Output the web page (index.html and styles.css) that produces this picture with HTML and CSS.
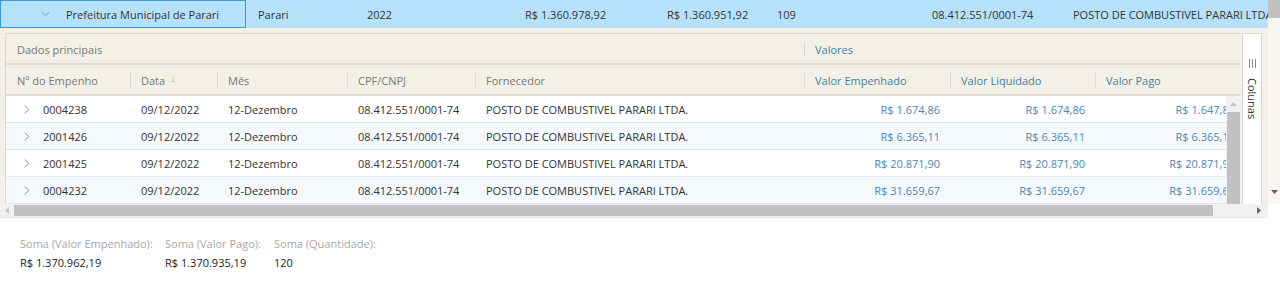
FILE: index.html
```html
<!DOCTYPE html>
<html lang="pt">
<head>
<meta charset="utf-8">
<link rel="stylesheet" href="styles.css">
</head>
<body>
<div class="page">
  <div class="upper">
    <div class="main">
      <div class="toprow">
        <div class="tcell c-org"><svg class="chev-down" width="9" height="6" viewBox="0 0 9 6"><path d="M0.5 0.8 L4.5 4.8 L8.5 0.8" fill="none" stroke="#8a9aa6" stroke-width="1"/></svg>Prefeitura Municipal de Parari</div>
        <div class="tcell c-mun">Parari</div>
        <div class="tcell c-ano">2022</div>
        <div class="tcell c-v1">R$ 1.360.978,92</div>
        <div class="tcell c-v2">R$ 1.360.951,92</div>
        <div class="tcell c-q">109</div>
        <div class="tcell c-cnpj">08.412.551/0001-74</div>
        <div class="tcell c-forn">POSTO DE COMBUSTIVEL PARARI LTDA.</div>
      </div>
      <div class="beige">
        <div class="panel">
          <div class="grid">
            <div class="grouprow">
              <div class="gcell g-dados">Dados principais</div>
              <div class="gcell g-valores"><span class="sep"></span>Valores</div>
            </div>
            <div class="headrow">
              <div class="hcell w1">Nº do Empenho</div>
              <div class="hcell w2"><span class="sep"></span>Data <span class="sort">↓</span></div>
              <div class="hcell w3"><span class="sep"></span>Mês</div>
              <div class="hcell w4"><span class="sep"></span>CPF/CNPJ</div>
              <div class="hcell w5"><span class="sep"></span>Fornecedor</div>
              <div class="hcell w6 blue"><span class="sep"></span>Valor Empenhado</div>
              <div class="hcell w7 blue"><span class="sep"></span>Valor Liquidado</div>
              <div class="hcell w8 blue"><span class="sep"></span>Valor Pago</div>
            </div>
            <div class="bodywrap">
              <div class="rows">
                <div class="row">
                  <div class="cell w1"><svg class="chev-right" width="6" height="9" viewBox="0 0 6 9"><path d="M0.8 0.5 L4.8 4.5 L0.8 8.5" fill="none" stroke="#8a8a8a" stroke-width="1"/></svg>0004238</div>
                  <div class="cell w2">09/12/2022</div>
                  <div class="cell w3">12-Dezembro</div>
                  <div class="cell w4">08.412.551/0001-74</div>
                  <div class="cell w5">POSTO DE COMBUSTIVEL PARARI LTDA.</div>
                  <div class="cell w6 num">R$ 1.674,86</div>
                  <div class="cell w7 num">R$ 1.674,86</div>
                  <div class="cell w8 num">R$ 1.647,86</div>
                </div>
                <div class="row alt">
                  <div class="cell w1"><svg class="chev-right" width="6" height="9" viewBox="0 0 6 9"><path d="M0.8 0.5 L4.8 4.5 L0.8 8.5" fill="none" stroke="#8a8a8a" stroke-width="1"/></svg>2001426</div>
                  <div class="cell w2">09/12/2022</div>
                  <div class="cell w3">12-Dezembro</div>
                  <div class="cell w4">08.412.551/0001-74</div>
                  <div class="cell w5">POSTO DE COMBUSTIVEL PARARI LTDA.</div>
                  <div class="cell w6 num">R$ 6.365,11</div>
                  <div class="cell w7 num">R$ 6.365,11</div>
                  <div class="cell w8 num">R$ 6.365,11</div>
                </div>
                <div class="row">
                  <div class="cell w1"><svg class="chev-right" width="6" height="9" viewBox="0 0 6 9"><path d="M0.8 0.5 L4.8 4.5 L0.8 8.5" fill="none" stroke="#8a8a8a" stroke-width="1"/></svg>2001425</div>
                  <div class="cell w2">09/12/2022</div>
                  <div class="cell w3">12-Dezembro</div>
                  <div class="cell w4">08.412.551/0001-74</div>
                  <div class="cell w5">POSTO DE COMBUSTIVEL PARARI LTDA.</div>
                  <div class="cell w6 num">R$ 20.871,90</div>
                  <div class="cell w7 num">R$ 20.871,90</div>
                  <div class="cell w8 num">R$ 20.871,90</div>
                </div>
                <div class="row alt">
                  <div class="cell w1"><svg class="chev-right" width="6" height="9" viewBox="0 0 6 9"><path d="M0.8 0.5 L4.8 4.5 L0.8 8.5" fill="none" stroke="#8a8a8a" stroke-width="1"/></svg>0004232</div>
                  <div class="cell w2">09/12/2022</div>
                  <div class="cell w3">12-Dezembro</div>
                  <div class="cell w4">08.412.551/0001-74</div>
                  <div class="cell w5">POSTO DE COMBUSTIVEL PARARI LTDA.</div>
                  <div class="cell w6 num">R$ 31.659,67</div>
                  <div class="cell w7 num">R$ 31.659,67</div>
                  <div class="cell w8 num">R$ 31.659,67</div>
                </div>
              </div>
              <div class="vscroll">
                <div class="varrow"><svg width="7" height="4" viewBox="0 0 7 4"><path d="M0 4 L3.5 0 L7 4 Z" fill="#c6c6c6"/></svg></div>
                <div class="vthumb"></div>
              </div>
            </div>
          </div>
          <div class="colpanel">
            <div class="colicon"><span></span><span></span><span></span></div>
            <div class="coltext">Colunas</div>
          </div>
        </div>
      </div>
    </div>
    <div class="outerscroll">
      <div class="othumb"></div>
      <div class="otrack"></div>
      <div class="oarrow"><svg width="7" height="4" viewBox="0 0 7 4"><path d="M0 0 L7 0 L3.5 4 Z" fill="#606060"/></svg></div>
    </div>
  </div>
  <div class="hscrollrow">
    <div class="hscroll">
      <div class="harrow left"><svg width="4" height="7" viewBox="0 0 4 7"><path d="M4 0 L4 7 L0 3.5 Z" fill="#c6c6c6"/></svg></div>
      <div class="hthumb"></div>
      <div class="harrow right"><svg width="4" height="7" viewBox="0 0 4 7"><path d="M0 0 L0 7 L4 3.5 Z" fill="#606060"/></svg></div>
    </div>
  </div>
  <div class="footer">
    <div class="sum s1"><div class="slabel">Soma (Valor Empenhado):</div><div class="sval">R$ 1.370.962,19</div></div>
    <div class="sum s2"><div class="slabel">Soma (Valor Pago):</div><div class="sval">R$ 1.370.935,19</div></div>
    <div class="sum s3"><div class="slabel">Soma (Quantidade):</div><div class="sval">120</div></div>
  </div>
</div>
</body>
</html>
```

FILE: styles.css
```css
* { box-sizing: border-box; }
html, body { margin: 0; padding: 0; background: #ffffff; }
body {
  font-family: "Open Sans", "Noto Sans", sans-serif;
  font-size: 11px;
  color: #333333;
  width: 1280px;
  height: 282px;
  overflow: hidden;
}
.page { width: 1280px; }

.upper { display: flex; height: 204px; }
.main { width: 1268px; display: flex; flex-direction: column; }

/* top grouped row */
.toprow {
  height: 28px;
  background: #b6e1fb;
  display: flex;
  align-items: stretch;
  white-space: nowrap;
  overflow: hidden;
}
.tcell { display: flex; align-items: center; flex: none; }
.c-org {
  width: 246px;
  border: 1px solid #3e9ad6;
  padding-left: 40px;
}
.chev-down { margin-right: 16px; }
.c-mun { width: 109px; padding-left: 12px; }
.c-ano { width: 170px; padding-left: 12px; }
.c-v1 { width: 142px; padding-left: 0; }
.c-v2 { width: 110px; }
.c-q { width: 155px; }
.c-cnpj { width: 141px; }
.c-forn { flex: 1 1 auto; overflow: hidden; }

/* beige area */
.beige {
  flex: 1;
  background: #f3f1e5;
  padding: 5px 6px 0 5px;
  overflow: hidden;
}
.panel { display: flex; height: 100%; gap: 2px; }
.grid {
  width: 1235px;
  display: flex;
  flex-direction: column;
  border-left: 1px solid #dcd9cc;
  border-top: 1px solid #dcd9cc;
  overflow: hidden;
}
.grouprow, .headrow {
  display: flex;
  height: 31px;
  border-bottom: 2px solid #dedbd0;
  color: #777777;
  white-space: nowrap;
  padding-top: 1px;
}
.gcell, .hcell {
  position: relative;
  display: flex;
  align-items: center;
  padding-left: 11px;
  flex: none;
}
.g-dados { width: 798px; }
.g-valores { flex: 1; color: #3f7fa8; }
.sep {
  position: absolute;
  left: 0;
  top: 7px;
  height: 14px;
  width: 1px;
  background: #dcd9cc;
}
.blue { color: #3f7fa8; }
.sort { font-size: 11px; color: #a3a8ad; margin-left: 5px; position: relative; top: -3px; }

.w1 { width: 124px; }
.w2 { width: 87px; }
.w3 { width: 130px; }
.w4 { width: 128px; }
.w5 { width: 329px; }
.w6 { width: 146px; }
.w7 { width: 145px; }
.w8 { width: 150px; }

.bodywrap { flex: 1; display: flex; overflow: hidden; background: #ffffff; }
.rows { width: 1221px; overflow: hidden; }
.row {
  display: flex;
  height: 27px;
  border-bottom: 1px solid #e4e8ec;
  white-space: nowrap;
  background: #ffffff;
}
.row.alt { background: #f6f9fc; }
.cell {
  display: flex;
  align-items: center;
  padding-left: 11px;
  flex: none;
  overflow: hidden;
}
.cell.w1 { padding-left: 18px; }
.chev-right { margin-right: 13px; }
.cell.num { justify-content: flex-end; padding-left: 0; padding-right: 10px; color: #4a86b3; }

.vscroll {
  width: 14px;
  flex: none;
  background: #f1f1f1;
  display: flex;
  flex-direction: column;
  align-items: stretch;
}
.varrow { height: 16px; display: flex; align-items: center; justify-content: center; }
.vthumb { flex: 1; background: #c1c1c1; margin-left: 1px; }

.colpanel {
  width: 20px;
  flex: none;
  background: #ffffff;
  border: 1px solid #d6d6d6;
  border-bottom: none;
  display: flex;
  flex-direction: column;
  align-items: center;
  padding-top: 25px;
}
.colicon { display: flex; gap: 2px; height: 9px; margin-bottom: 10px; }
.colicon span { width: 1px; height: 9px; background: #888; }
.coltext {
  writing-mode: vertical-rl;
  color: #333333;
  font-size: 11px;
  line-height: 12px;
}

.outerscroll {
  width: 12px;
  display: flex;
  flex-direction: column;
  background: #f7f6f1;
}
.othumb { height: 18px; background: #c1c1c1; }
.otrack { flex: 1; }
.oarrow { height: 24px; display: flex; justify-content: center; align-items: center; }

.hscrollrow { height: 14px; display: flex; }
.hscroll {
  width: 1268px;
  background: #f1f1f1;
  display: flex;
  align-items: stretch;
  padding: 1px 0;
  border-bottom: 1px solid #e6e6e6;
}
.harrow { width: 14px; display: flex; align-items: center; justify-content: center; flex: none; }
.harrow.right { margin-left: auto; width: 18px; }
.hthumb { width: 1199px; background: #c1c1c1; }

.footer {
  display: flex;
  padding: 16px 0 0 20px;
}
.sum { display: flex; flex-direction: column; flex: none; }
.s1 { width: 145px; }
.s2 { width: 109px; }
.slabel { color: #a8a8a8; font-size: 11px; line-height: 19px; }
.sval { color: #1a1a1a; font-size: 11px; line-height: 19px; }
```
